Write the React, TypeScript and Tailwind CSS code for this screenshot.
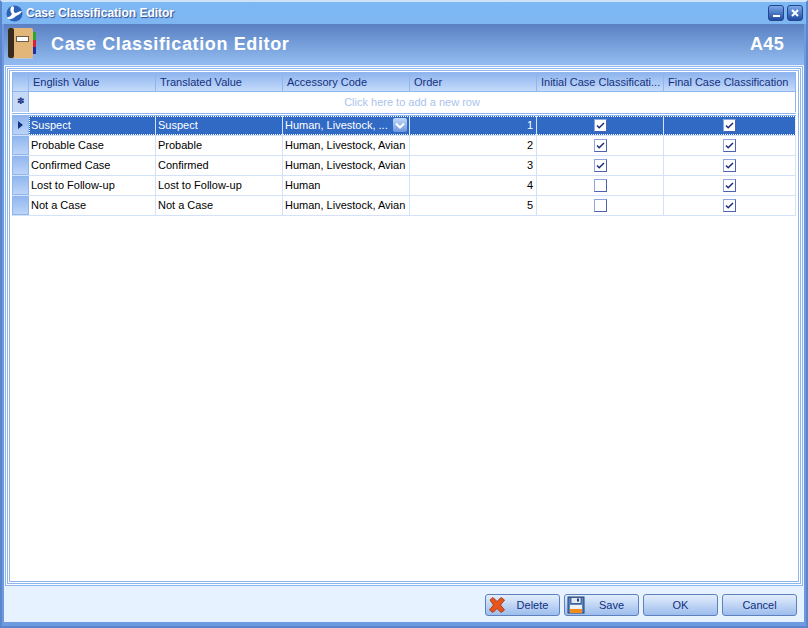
import React from "react";

const font = "font-['Liberation_Sans',Arial,sans-serif]";

const columns = [
  { label: "English Value", width: "w-[127px]" },
  { label: "Translated Value", width: "w-[127px]" },
  { label: "Accessory Code", width: "w-[127px]" },
  { label: "Order", width: "w-[127px]" },
  { label: "Initial Case Classificati...", width: "w-[127px]" },
  { label: "Final Case Classification", width: "flex-1" },
];

const rows = [
  { en: "Suspect", tr: "Suspect", code: "Human, Livestock, ...", order: 1, initial: true, final: true },
  { en: "Probable Case", tr: "Probable", code: "Human, Livestock, Avian", order: 2, initial: true, final: true },
  { en: "Confirmed Case", tr: "Confirmed", code: "Human, Livestock, Avian", order: 3, initial: true, final: true },
  { en: "Lost to Follow-up", tr: "Lost to Follow-up", code: "Human", order: 4, initial: false, final: true },
  { en: "Not a Case", tr: "Not a Case", code: "Human, Livestock, Avian", order: 5, initial: false, final: true },
];

// ─── Small drawings ───
function AppLogo() {
  return (
    <svg width="17" height="17" viewBox="0 0 17 17">
      <circle cx="8.500" cy="8.500" r="8" fill="#2b62b8" />
      <path d="M5 2 C6 1 8 1 8 3 C8 5 7 6 9 8 C11 8 13 6 16 6 C15 8 13 10 10 11 C8 13 5 15 2 14 C1 13 1 12 2 12 C4 12 5 10 6 9 C4 7 4 4 5 2 Z" fill="#fff" />
    </svg>
  );
}

function Notebook() {
  return (
    <svg width="30" height="32" viewBox="0 0 30 32">
      <rect x="25" y="4" width="4" height="8" fill="#2fa52f" />
      <rect x="25" y="12" width="4" height="7" fill="#d8203c" />
      <rect x="25" y="19" width="4" height="7" fill="#1c2fa8" />
      <rect x="1" y="0" width="25" height="30" rx="2" fill="#e2b578" />
      <rect x="1" y="0" width="6" height="30" rx="2" fill="#3a2a1e" />
      <rect x="7" y="30" width="19" height="1" fill="#b9c4d4" />
      <rect x="9.500" y="8.500" width="12" height="5" fill="#fff" stroke="#6b5b48" />
    </svg>
  );
}

function CheckBox({ checked }: { checked: boolean }) {
  return (
    <div className="w-[13px] h-[13px] bg-white border border-t-[#8ea6dc] border-l-[#8ea6dc] border-r-[#4a62b0] border-b-[#4a62b0] flex items-center justify-center">
      {checked && (
        <svg width="9" height="7" viewBox="0 0 9 7">
          <path d="M1 3.500 L3.200 5.700 L8 1" fill="none" stroke="#1a2a80" strokeWidth="1.500" />
        </svg>
      )}
    </div>
  );
}

function DeleteIcon() {
  return (
    <svg width="18" height="18" viewBox="0 0 18 18">
      <path d="M2 4 L5 1.500 L9 5.500 L13 1.500 L16.500 4 L12.500 9 L16.500 14 L13 16.500 L9 12.500 L5 16.500 L1.500 14 L5.500 9 Z" fill="#e8541c" stroke="#a8401c" strokeWidth="1" />
    </svg>
  );
}

function SaveIcon() {
  return (
    <svg width="18" height="18" viewBox="0 0 18 18">
      <rect x="1" y="1" width="16" height="16" fill="#5b86c4" stroke="#1f3f70" />
      <rect x="4" y="1.500" width="10" height="6" fill="#dfe8f4" stroke="#1f3f70" strokeWidth="0.700" />
      <rect x="10" y="2.500" width="2" height="3" fill="#1f3f70" />
      <rect x="3" y="9" width="12" height="4" fill="#eef0f2" />
      <rect x="3" y="13" width="12" height="4" fill="#f28a1e" />
    </svg>
  );
}

function ToolButton({ label, icon }: { label: string; icon?: React.ReactNode }) {
  return (
    <button className="w-[75px] h-[22px] rounded-[3px] border border-[#5f80bf] bg-gradient-to-b from-[#e3eefd] to-[#9dbdec] flex items-center text-[11px] text-[#11307e]">
      {icon && <span className="pl-[2px] flex items-center">{icon}</span>}
      <span className="flex-1 text-center">{label}</span>
    </button>
  );
}

// ─── Main Page ───
export default function App() {
  return (
    <div className={`${font} w-[808px] h-[628px] flex flex-col overflow-hidden bg-[#6d9ae0] border-[2px] border-[#5b86cc] border-t-[#cfe2fa]`}>
      {/* Title bar */}
      <div className="h-[22px] flex items-center pl-[4px] pr-[3px] bg-gradient-to-b from-[#7cb8f4] to-[#7eb6f2] shrink-0">
        <AppLogo />
        <span className="ml-[3px] text-[12px] font-bold text-white [text-shadow:1px_1px_1px_#2a4a90]">Case Classification Editor</span>
        <div className="ml-auto flex gap-[3px]">
          <div className="w-[16px] h-[16px] rounded-[3px] bg-gradient-to-b from-[#7aa8e8] to-[#1f4aa0] border border-[#24468e] flex items-end justify-center pb-[3px]">
            <div className="w-[7px] h-[2px] bg-white" />
          </div>
          <div className="w-[16px] h-[16px] rounded-[3px] bg-gradient-to-b from-[#7aa8e8] to-[#1f4aa0] border border-[#24468e] flex items-center justify-center text-white">
            <svg width="8" height="8" viewBox="0 0 8 8">
              <path d="M1 1 L7 7 M7 1 L1 7" stroke="#fff" strokeWidth="2" />
            </svg>
          </div>
        </div>
      </div>

      <div className="flex-1 flex flex-col mx-[2px] mb-[4px] min-h-0">
        {/* Header */}
        <div className="h-[41px] shrink-0 flex items-center pl-[3px] pr-[20px] bg-gradient-to-b from-[#5a80c2] to-[#92bcf0] border-b border-[#8fb6ee]">
          <Notebook />
          <h1 className="ml-[14px] text-[18px] font-bold text-white tracking-[0.63px]">Case Classification Editor</h1>
          <span className="ml-auto text-[18px] font-bold text-white tracking-[0.35px]">A45</span>
        </div>

        {/* Grid frame */}
        <div className="flex-1 min-h-0 flex flex-col bg-[#e6f2ff]">
          <div className="flex-1 min-h-0 m-[1px] border border-[#8fb6ee] p-[1px] bg-white">
            <div className="h-full border border-[#8fb6ee] p-[1px] bg-white">
              <div className="h-full border border-[#8fb6ee] px-[2px] pt-[1px] bg-white">
                {/* Column headers */}
                <div className="flex h-[20px] border border-[#8fb6ee] text-[11px] text-[#15317e]">
                  <div className="w-[16px] shrink-0 bg-gradient-to-b from-[#8fb5ee] to-[#c4dafa] border-r border-[#8fb6ee]" />
                  {columns.map((c) => (
                    <div key={c.label} className={`${c.width} shrink-0 flex items-center pl-[4px] bg-gradient-to-b from-[#8fb5ee] to-[#c4dafa] border-r border-[#8fb6ee] last:border-r-0`}>
                      {c.label}
                    </div>
                  ))}
                </div>

                {/* New row */}
                <div className="flex h-[20px] border-l border-r border-[#8fb6ee]">
                  <div className="w-[16px] shrink-0 bg-[#c6daf8] border-r border-[#8fb6ee] flex items-center justify-center text-[9px] text-[#15317e]">✽</div>
                  <div className="flex-1 flex items-center justify-center text-[11px] text-[#a9c4ec]">Click here to add a new row</div>
                </div>
                <div className="h-[3px] border-t border-b border-[#8fb6ee] bg-white mt-[1px]" />

                {/* Rows */}
                {rows.map((r, i) => {
                  const selected = i === 0;
                  return (
                    <div key={r.en} className={`relative flex h-[20px] text-[11px] border-b border-[#d3e2f8] ${selected ? "bg-[#316ac5] text-white" : "text-black"}`}>
                      <div className="w-[17px] shrink-0 bg-gradient-to-b from-[#8fb5ee] to-[#bcd4f8] border-l border-r border-b border-[#8fb6ee] flex items-center justify-center">
                        {selected && (
                          <svg width="5" height="8" viewBox="0 0 5 8">
                            <path d="M0 0 L5 4 L0 8 Z" fill="#15317e" />
                          </svg>
                        )}
                      </div>
                      <div className="w-[127px] shrink-0 flex items-center pl-[2px] border-r border-[#d3e2f8]">{r.en}</div>
                      <div className="w-[127px] shrink-0 flex items-center pl-[2px] border-r border-[#d3e2f8]">{r.tr}</div>
                      <div className="w-[127px] shrink-0 flex items-center pl-[2px] border-r border-[#d3e2f8] relative">
                        {r.code}
                        {selected && (
                          <div className="absolute right-[2px] top-[2px] w-[14px] h-[14px] rounded-[2px] bg-gradient-to-b from-[#c2d8f8] to-[#6d96de] flex items-center justify-center">
                            <svg width="10" height="7" viewBox="0 0 10 7">
                              <path d="M1 1.500 L5 5.500 L9 1.500" fill="none" stroke="#fff" strokeWidth="2" />
                            </svg>
                          </div>
                        )}
                      </div>
                      <div className="w-[127px] shrink-0 flex items-center justify-end pr-[3px] border-r border-[#d3e2f8]">{r.order}</div>
                      <div className="w-[127px] shrink-0 flex items-center justify-center border-r border-[#d3e2f8]">
                        <CheckBox checked={r.initial} />
                      </div>
                      <div className="flex-1 flex items-center justify-center border-r border-[#d3e2f8]">
                        <CheckBox checked={r.final} />
                      </div>
                      {selected && <div className="absolute left-[17px] right-0 top-0 bottom-0 border border-dotted border-white pointer-events-none" />}
                    </div>
                  );
                })}
              </div>
            </div>
          </div>

          {/* Footer */}
          <div className="h-[35px] shrink-0 flex items-start justify-end gap-[4px] pr-[7px] pt-[7px] text-[11px]">
            <ToolButton label="Delete" icon={<DeleteIcon />} />
            <ToolButton label="Save" icon={<SaveIcon />} />
            <ToolButton label="OK" />
            <ToolButton label="Cancel" />
          </div>
        </div>
      </div>
    </div>
  );
}
